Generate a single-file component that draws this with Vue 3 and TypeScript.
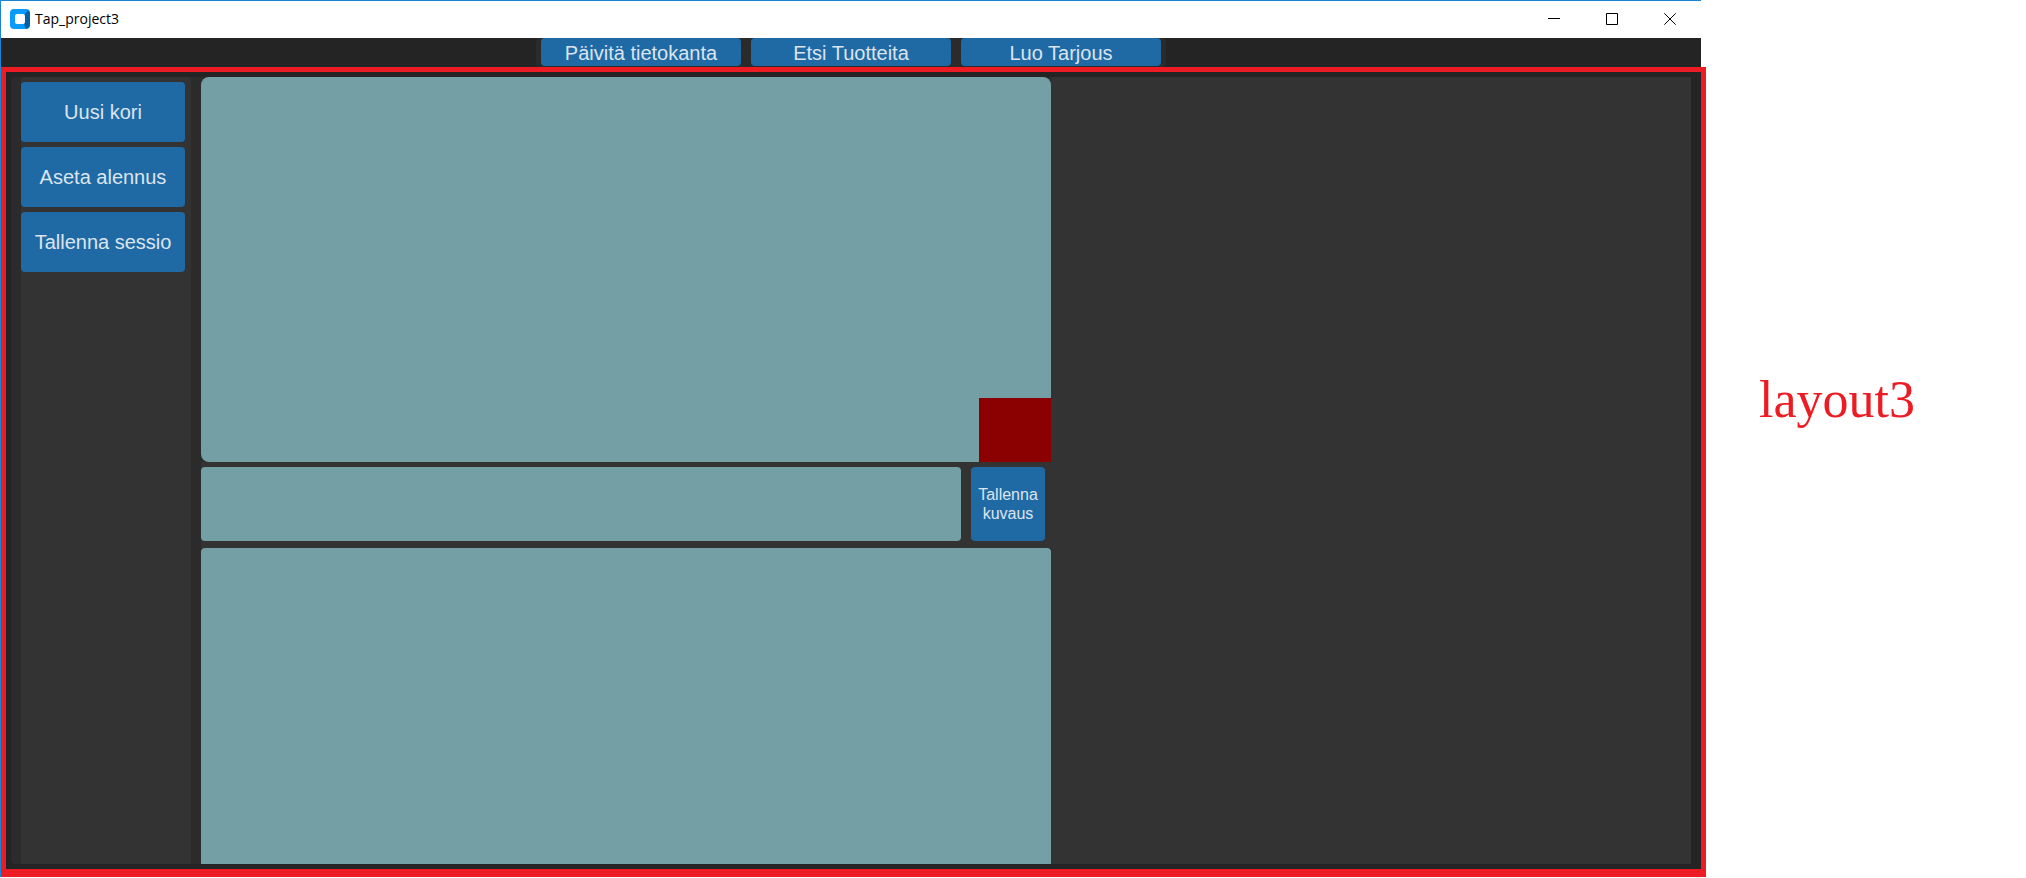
<script setup lang="ts">
import { ref } from 'vue'

const title = 'Tap_project3'
const topActions: string[] = ['Päivitä tietokanta', 'Etsi Tuotteita', 'Luo Tarjous']
const sideActions: string[] = ['Uusi kori', 'Aseta alennus', 'Tallenna sessio']
const description = ref<string>('')
</script>

<template>
  <div class="page">
    <main class="window">
      <header class="titlebar">
        <svg class="logo" viewBox="0 0 20 20" aria-hidden="true">
          <rect width="20" height="20" rx="4" fill="#0a9bff" />
          <path d="M14 5 17 1Q20 2 20 5V15Q20 19 16 20L14 15Z" fill="#0560a8" />
          <path d="M4 0H14Q18 0 16.500 3L14 6H5Z" fill="#0a9bff" />
          <rect x="5" y="5" width="10" height="10" rx="2" fill="#fff" />
        </svg>
        <h1 class="title">{{ title }}</h1>
        <div class="controls">
          <button type="button" aria-label="Minimize">
            <svg viewBox="0 0 12 12"><path d="M0 5.500H12" /></svg>
          </button>
          <button type="button" aria-label="Maximize">
            <svg viewBox="0 0 12 12"><path d="M.5.5H11.500V11.500H.5Z" /></svg>
          </button>
          <button type="button" aria-label="Close">
            <svg viewBox="0 0 12 12"><path d="M.3.3 11.700 11.700M11.700.3.3 11.700" /></svg>
          </button>
        </div>
      </header>

      <div class="toolbar">
        <nav class="tools">
          <button v-for="label in topActions" :key="label" type="button" class="action tool">{{ label }}</button>
        </nav>
      </div>

      <div class="frame">
        <div class="workspace">
          <nav class="sidebar">
            <button v-for="label in sideActions" :key="label" type="button" class="action side">{{ label }}</button>
          </nav>
          <div class="center">
            <section class="basket"><div class="marker"></div></section>
            <form class="entry" @submit.prevent>
              <input v-model="description" type="text" aria-label="Kuvaus" />
              <button type="submit" class="action save">Tallenna kuvaus</button>
            </form>
            <section class="results"></section>
          </div>
          <aside class="details"></aside>
        </div>
      </div>
    </main>
    <p class="note">layout3</p>
  </div>
</template>

<style>
body {
  margin: 0;
  background: #fff;
}
</style>

<style scoped>
* {
  box-sizing: border-box;
}
.page {
  display: flex;
  min-height: 100vh;
  padding-bottom: 1px;
  font-family: "Liberation Sans", Arial, sans-serif;
}
.window {
  flex: 1;
  min-width: 0;
  display: flex;
  flex-direction: column;
  border-left: 1px solid #1883d7;
}
.titlebar {
  display: flex;
  align-items: center;
  height: 38px;
  margin-right: 5px;
  padding: 0 2px 1px 9px;
  border-top: 1px solid #1883d7;
  background: #fff;
}
.logo {
  width: 20px;
  height: 20px;
}
.title {
  flex: 1;
  margin: 0;
  padding-left: 5px;
  font: 400 14px/20px "Open Sans", "Noto Sans", sans-serif;
  color: #000;
}
.controls {
  display: flex;
  align-self: stretch;
}
.controls button {
  display: flex;
  align-items: center;
  justify-content: center;
  width: 58px;
  padding: 0;
  border: 0;
  background: none;
}
.controls svg {
  width: 12px;
  height: 12px;
  fill: none;
  stroke: #000;
  stroke-width: 1;
}
.toolbar {
  display: flex;
  justify-content: center;
  height: 29px;
  margin-right: 5px;
  background: #242424;
}
.tools {
  display: flex;
  gap: 10px;
  height: 29px;
  padding: 0 5px 1px;
  border-radius: 4px;
  background: #2b2b2b;
}
.action {
  padding: 0;
  border: 0;
  border-radius: 4px;
  background: #1f6aa5;
  color: #dce4ee;
  font-family: inherit;
  font-size: 20px;
  line-height: 24px;
}
.tool {
  width: 200px;
  padding-top: 2px;
}
.frame {
  flex: 1;
  display: flex;
  padding: 5px;
  border: 5px solid #ed1c24;
  border-bottom-width: 8px;
  background: #242424;
}
.workspace {
  flex: 1;
  display: flex;
  margin-right: 5px;
  padding-left: 10px;
  border-radius: 4px 0 0 4px;
  background: #2b2b2b;
}
.sidebar {
  display: flex;
  flex-direction: column;
  gap: 5px;
  width: 170px;
  margin-right: 10px;
  padding: 5px 6px 0 0;
  border-radius: 4px 4px 0 0;
  background: #333;
}
.side {
  height: 60px;
}
.center {
  flex: 85;
  min-width: 0;
  display: flex;
  flex-direction: column;
}
.basket {
  flex: 385;
  display: flex;
  align-items: flex-end;
  justify-content: flex-end;
  border-radius: 8px 8px 0 8px;
  background: #749fa5;
}
.marker {
  width: 72px;
  height: 64px;
  background: #8b0000;
}
.entry {
  display: flex;
  gap: 10px;
  padding: 5px 6px 7px 0;
  background: #333;
}
.entry input {
  flex: 1;
  min-width: 0;
  height: 74px;
  padding: 0 12px;
  border: 0;
  border-radius: 4px;
  background: #749fa5;
  color: #1a1a1a;
  font: 20px/24px "Liberation Sans", Arial, sans-serif;
}
.save {
  width: 74px;
  font-size: 16px;
  line-height: 19px;
}
.results {
  flex: 316;
  border-radius: 4px 4px 0 0;
  background: #749fa5;
}
.details {
  flex: 64;
  border-radius: 4px 0 0 0;
  background: #333;
}
.note {
  width: 320px;
  margin: 0;
  padding: 370px 0 0 53px;
  font: 52px/60px "Liberation Serif", "Times New Roman", serif;
  color: #ed1c24;
}
</style>
